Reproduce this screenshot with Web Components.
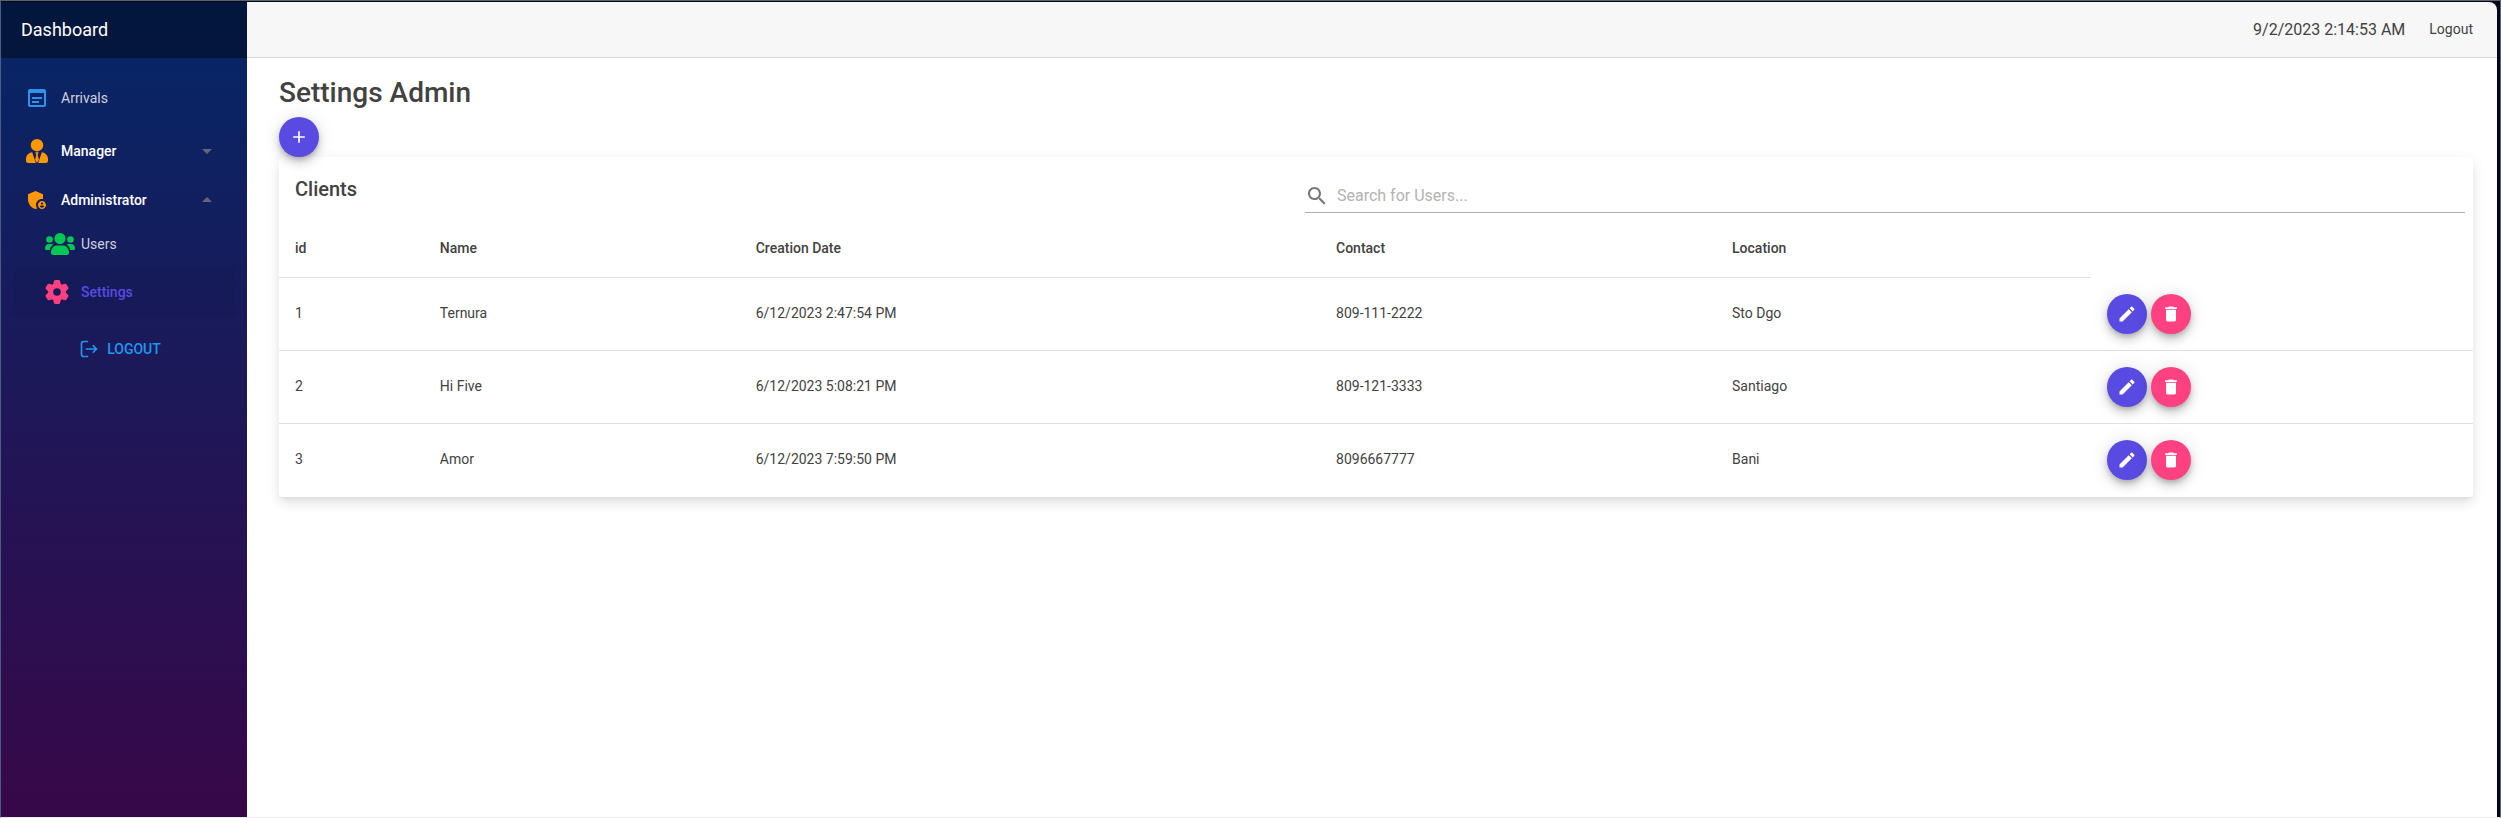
<!DOCTYPE html>
<html lang="en">
<head>
<meta charset="utf-8">
<title>Settings Admin</title>
<style>
  html, body { height: 100%; }
  body { margin: 0; background: #02071a; font-family: Roboto, sans-serif; color: #424242; font-size: 14px; line-height: 20px; }
</style>
</head>
<body>
<app-shell>
  <side-bar slot="side"></side-bar>
  <top-bar slot="top"></top-bar>
  <settings-page></settings-page>
</app-shell>

<script>
const ICONS = {
  arrivals: '<path d="M14 17H7v-2h7v2zm3-4H7v-2h10v2zM19 3H5c-1.1 0-2 .9-2 2v14c0 1.100.9 2 2 2h14c1.100 0 2-.9 2-2V5c0-1.100-.9-2-2-2zm0 16H5V7h14v12z"/>',
  manager: '<path d="M12 0a6.200 6.200 0 1 1 0 12.400A6.200 6.200 0 0 1 12 0z"/><path d="M7.200 13.200 10.800 24H3.500A2.500 2.500 0 0 1 1 21.500V20c0-3.600 2.600-6.400 6.200-6.800zM16.800 13.200 13.200 24h7.300a2.500 2.500 0 0 0 2.500-2.500V20c0-3.600-2.600-6.400-6.200-6.800zM10.300 13.200h3.400l-1 2.600 1.200 5L12 24l-1.900-3.200 1.200-5z"/>',
  shield: '<path d="M17 11c.34 0 .67.04 1 .09V6.270L10.500 3 3 6.270v4.910c0 4.540 3.200 8.790 7.500 9.820.55-.13 1.080-.32 1.600-.55-.69-.98-1.100-2.170-1.100-3.450 0-3.310 2.690-6 6-6z"/><path d="M17 13c-2.210 0-4 1.790-4 4s1.790 4 4 4 4-1.790 4-4-1.790-4-4-4zm0 1.380c.62 0 1.120.51 1.120 1.120s-.51 1.120-1.120 1.120-1.120-.51-1.120-1.120.5-1.120 1.120-1.120zm0 5.370c-.93 0-1.740-.46-2.240-1.170.05-.72 1.510-1.080 2.240-1.080s2.190.36 2.240 1.080c-.5.71-1.310 1.170-2.240 1.170z"/>',
  gear: '<circle cx="12" cy="12" r="6.300" fill="none" stroke="currentColor" stroke-width="5"/>' +
    [0, 60, 120, 180, 240, 300].map(a => `<path transform="rotate(${a} 12 12)" d="M7.800 5.500 9 .9C9.200.3 9.600 0 10.200 0h3.600c.6 0 1 .3 1.200.9l1.200 4.600z"/>`).join(''),
  logout: '<path d="M11 3H5.500A2.500 2.500 0 0 0 3 5.500v13A2.500 2.500 0 0 0 5.500 21H11M8 12h13M16.500 7.500 21 12l-4.500 4.500" fill="none" stroke="currentColor" stroke-width="2"/>',
  add: '<path d="M19 13h-6v6h-2v-6H5v-2h6V5h2v6h6v2z"/>',
  edit: '<path d="M3 17.250V21h3.750L17.810 9.940l-3.750-3.750L3 17.250zM20.710 7.040c.39-.39.39-1.020 0-1.410l-2.340-2.340c-.39-.39-1.020-.39-1.410 0l-1.830 1.830 3.750 3.750 1.830-1.830z"/>',
  trash: '<path d="M6 19c0 1.100.9 2 2 2h8c1.100 0 2-.9 2-2V7H6v12zM19 4h-3.500l-1-1h-5l-1 1H5v2h14V4z"/>',
  search: '<path d="M15.500 14h-.79l-.28-.27C15.410 12.590 16 11.110 16 9.500 16 5.910 13.090 3 9.500 3S3 5.910 3 9.500 5.910 16 9.500 16c1.610 0 3.090-.59 4.230-1.570l.27.28v.79l5 4.990L20.490 19l-4.990-5zm-6 0C7.010 14 5 11.990 5 9.500S7.010 5 9.500 5 14 7.010 14 9.500 11.990 14 9.500 14z"/>',
  down: '<path d="M7 10l5 5 5-5z"/>',
  up: '<path d="M7 14l5-5 5 5z"/>'
};
const GROUP = '<svg viewBox="0 0 30 22" width="30" height="22" fill="currentColor" aria-hidden="true"><circle cx="15" cy="5.500" r="5.500"/><circle cx="4.500" cy="6.500" r="3.300"/><circle cx="25.500" cy="6.500" r="3.300"/><path d="M6 20c0-5 3-7.500 6-7.500h6c3 0 6 2.500 6 7.500 0 1.200-.8 2-2 2H8c-1.200 0-2-.8-2-2zM0 15.500C0 12.700 1.600 11 4 11h2.500c.8 0 1.500.2 2 .6C6.500 12.800 5.200 14.500 4.700 17H1.300C.5 17 0 16.400 0 15.500zM30 15.500c0-2.800-1.600-4.500-4-4.500h-2.500c-.8 0-1.500.2-2 .6 2 1.200 3.300 2.900 3.800 5.400h3.400c.8 0 1.300-.6 1.300-1.500z"/></svg>';
const icon = (name, size = 24) =>
  `<svg viewBox="0 0 24 24" width="${size}" height="${size}" fill="currentColor" aria-hidden="true">${ICONS[name]}</svg>`;

const define = (tag, render) => customElements.define(tag, class extends HTMLElement {
  constructor() { super(); this.attachShadow({ mode: 'open' }); }
  connectedCallback() { this.shadowRoot.innerHTML = render(this); }
});

define('app-shell', () => `
<style>
  :host { display: grid; grid-template-columns: 246px 1fr; grid-template-rows: 56px 1fr; min-height: 100%; box-sizing: border-box;
    border: 1px solid; border-color: #5c6470 #5c6470 #ececec #4c5c86; padding: 1px 3px 0 0; }
  .side { grid-row: 1 / 3; display: grid; }
  main { background: #fff; }
</style>
<div class="side"><slot name="side"></slot></div>
<slot name="top"></slot>
<main><slot></slot></main>`);

define('top-bar', () => `
<style>
  :host { display: flex; justify-content: flex-end; align-items: center; gap: 24px; padding: 0 24px; box-sizing: border-box;
    background: #f7f7f7; border-bottom: 1px solid #d6d5d5; border-top-right-radius: 8px; }
  time { font-size: 16px; line-height: 24px; }
  a { color: inherit; text-decoration: none; padding-bottom: 2px; }
</style>
<time>9/2/2023 2:14:53 AM</time><a href="#">Logout</a>`);

define('nav-item', el => `
<style>
  :host { display: block; }
  a { display: flex; align-items: center; height: 48px; padding: 0 16px 0 12px; color: #d0d1dd; text-decoration: none; border-radius: 4px; }
  i { display: flex; width: 24px; margin-right: 12px; color: var(--tint); }
  i svg { flex: none; }
  .label { flex: 1; }
  .caret { display: flex; color: #626678; }
  :host([group]) a { height: 49px; color: #fff; font-weight: 500; }
  :host([sub]) a { height: 40px; padding-left: 32px; }
  :host([active]) a { height: 48px; color: #594ae2; font-weight: 500; background: rgba(0, 0, 0, .04); }
</style>
<a href="#"><i>${el.getAttribute('icon') === 'users' ? GROUP : icon(el.getAttribute('icon'))}</i>
<span class="label"><slot></slot></span>${el.hasAttribute('group') ? `<span class="caret">${icon(el.getAttribute('group'))}</span>` : ''}</a>`);

define('side-bar', () => `
<style>
  :host { display: block; color: #fff; background: linear-gradient(#052767, #3a0647 105%); }
  header { height: 56px; display: flex; align-items: center; padding-left: 20px; background: rgba(0, 0, 0, .4); font-size: 18px; line-height: 24px; }
  nav { padding: 16px 12px 0; }
  .top, .users { margin-bottom: 4px; }
  .logout { display: flex; justify-content: center; padding: 23px 8px 0 0; }
  .logout a { display: flex; align-items: center; gap: 8px; color: #2196f3; font-weight: 500; text-decoration: none; }
</style>
<header>Dashboard</header>
<nav>
  <nav-item class="top" icon="arrivals" style="--tint:#2f93ec">Arrivals</nav-item>
  <nav-item icon="manager" group="down" style="--tint:#ff9800">Manager</nav-item>
  <nav-item icon="shield" group="up" style="--tint:#ff9800">Administrator</nav-item>
  <nav-item class="users" icon="users" sub style="--tint:#00c853">Users</nav-item>
  <nav-item icon="gear" sub active style="--tint:#ff4081">Settings</nav-item>
</nav>
<div class="logout"><a href="#">${icon('logout', 20)}LOGOUT</a></div>`);

define('round-button', el => `
<style>
  :host { display: block; }
  button { display: flex; align-items: center; justify-content: center; width: 40px; height: 40px; padding: 0; border: 0; border-radius: 50%;
    color: #fff; background: var(--fill, #594ae2);
    box-shadow: 0 3px 5px -1px rgba(0,0,0,.2), 0 6px 10px 0 rgba(0,0,0,.14), 0 1px 18px 0 rgba(0,0,0,.12); }
</style>
<button type="button" aria-label="${el.getAttribute('label')}">${icon(el.getAttribute('icon'), 20)}</button>`);

define('client-table', () => {
  const rows = [
    ['1', 'Ternura', '6/12/2023 2:47:54 PM', '809-111-2222', 'Sto Dgo'],
    ['2', 'Hi Five', '6/12/2023 5:08:21 PM', '809-121-3333', 'Santiago'],
    ['3', 'Amor', '6/12/2023 7:59:50 PM', '8096667777', 'Bani']
  ];
  return `
<style>
  :host { display: block; background: #fff; border-radius: 4px;
    box-shadow: 0 5px 5px -3px rgba(0,0,0,.06), 0 8px 10px 1px rgba(0,0,0,.042), 0 3px 14px 2px rgba(0,0,0,.036), 0 4px 20px rgba(0,0,0,.03); }
  .bar { display: grid; grid-template-columns: 1010fr 1160fr; height: 64px; padding: 0 8px 0 16px; align-items: center; }
  h2 { margin: 0; font-size: 20px; line-height: 32px; font-weight: 500; }
  label { display: flex; align-items: center; height: 32px; margin-top: 14px; border-bottom: 1px solid #b0b0b0; color: #757575; }
  input { flex: 1; min-width: 0; margin-left: 8px; padding: 0; border: 0; outline: 0; background: none; font: 16px/24px Roboto, sans-serif; color: #424242; }
  input::placeholder { color: #b3b3b3; opacity: 1; }
  table { width: 100%; table-layout: fixed; border-collapse: separate; border-spacing: 0; }
  th, td { box-sizing: border-box; padding: 0 16px 2px; text-align: left; border-bottom: 1px solid #e0e0e0; }
  th { height: 57px; font-weight: 500; }
  td { height: 73px; font-weight: 400; }
  td:last-child { padding-bottom: 0; }
  thead td { height: 57px; }
  thead td, tbody tr:last-child td { border-bottom-color: transparent; }
  .actions { display: flex; gap: 4px; }
</style>
<div class="bar"><h2>Clients</h2><label>${icon('search')}<input type="text" aria-label="Search" placeholder="Search for Users..."></label></div>
<table>
  <colgroup><col style="width:6.6%"><col style="width:14.4%"><col style="width:26.45%"><col style="width:18.05%"><col style="width:17.1%"><col></colgroup>
  <thead><tr><th>id</th><th>Name</th><th>Creation Date</th><th>Contact</th><th>Location</th><td></td></tr></thead>
  <tbody>${rows.map(r => `<tr>${r.map(c => `<td>${c}</td>`).join('')}<td><div class="actions"><round-button icon="edit" label="Edit"></round-button><round-button icon="trash" label="Delete" style="--fill:#ff4081"></round-button></div></td></tr>`).join('')}</tbody>
</table>`;
});

define('settings-page', () => `
<style>
  :host { display: block; padding: 16px 24px 24px 32px; }
  h1 { margin: 0; padding: 1px 0 6px; font-size: 28px; line-height: 36px; font-weight: 500; }
  .add { display: flex; position: relative; z-index: 1; }
</style>
<h1>Settings Admin</h1>
<div class="add"><round-button icon="add" label="Add"></round-button></div>
<client-table></client-table>`);
</script>
</body>
</html>
